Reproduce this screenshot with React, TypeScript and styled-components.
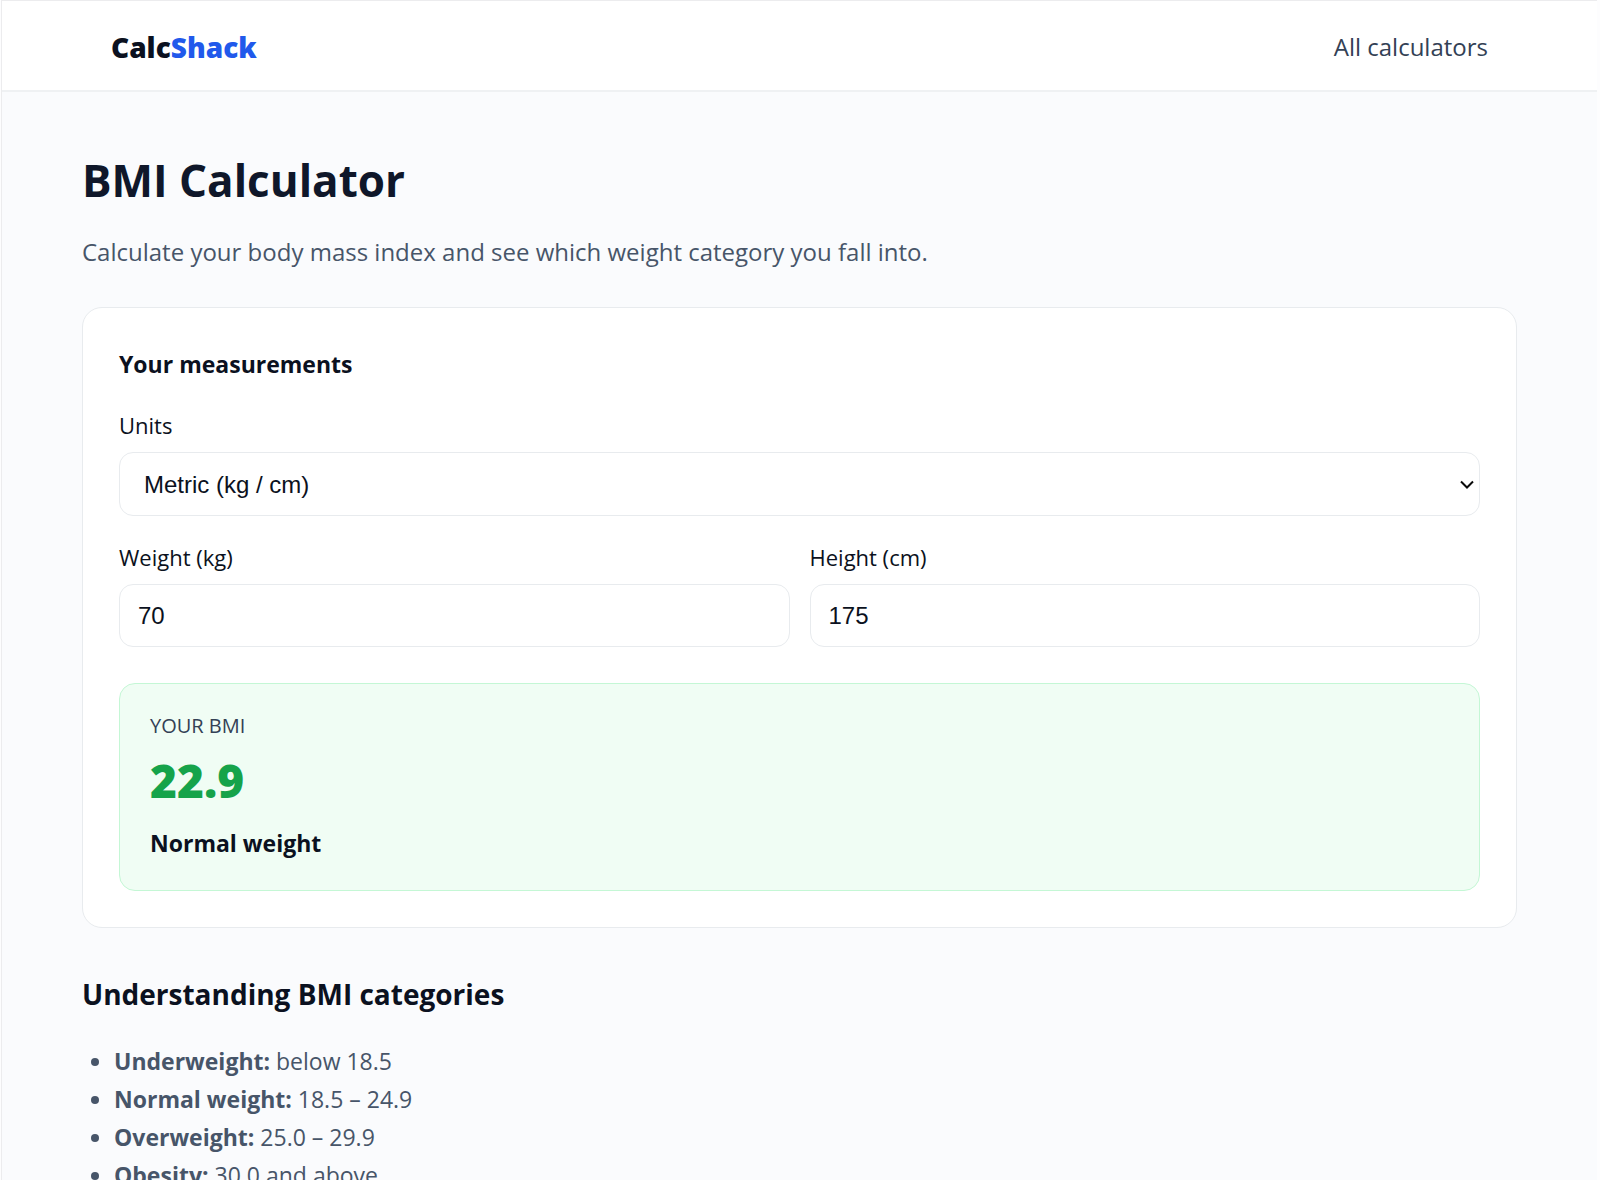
import React, { useState } from "react";
import styled, { createGlobalStyle } from "styled-components";

const sans = `"Open Sans", "Noto Sans", sans-serif`;
const controlFont = `"Liberation Sans", Arial, sans-serif`;

const GlobalStyle = createGlobalStyle`
  *, *::before, *::after { box-sizing: border-box; }
  html { background: #fdfdfe; }
  body {
    margin: 0;
    font-family: ${sans};
    color: #0b1120;
  }
  h1, h2, p, ul { margin: 0; }
`;

const Page = styled.div`
  min-height: 100vh;
  margin: 0 3px 0 1px;
  border-top: 1px solid #ececee;
  border-left: 1px solid #ececee;
  background: #fafbfd;
`;

const Header = styled.header`
  display: flex;
  align-items: center;
  justify-content: space-between;
  height: 91px;
  padding: 3px 109px 0;
  background: #ffffff;
  border-bottom: 2px solid #eff1f3;
`;

const Logo = styled.a`
  font-size: 28px;
  line-height: 40px;
  font-weight: 800;
  color: #0b1120;
  text-decoration: none;
`;

const LogoAccent = styled.span`
  color: #2159eb;
`;

const NavLink = styled.a`
  font-size: 24px;
  line-height: 40px;
  font-weight: 500;
  color: #334155;
  text-decoration: none;
`;

const Main = styled.main`
  padding: 58px 80px;
`;

const Title = styled.h1`
  font-size: 44px;
  line-height: 60px;
  font-weight: 700;
  color: #0f172a;
`;

const Lead = styled.p`
  margin-top: 23px;
  font-size: 24px;
  line-height: 38px;
  color: #475569;
`;

const Card = styled.section`
  margin-top: 36px;
  padding: 36px;
  background: #ffffff;
  border: 1px solid #e8ebee;
  border-radius: 20px;
`;

const CardTitle = styled.h2`
  font-size: 23px;
  line-height: 40px;
  font-weight: 700;
`;

const Field = styled.div`
  display: flex;
  flex-direction: column;
  gap: 12px;
  margin-top: 26px;
`;

const FieldRow = styled.div`
  display: grid;
  grid-template-columns: 1fr 1fr;
  column-gap: 20px;
`;

const Label = styled.label`
  font-size: 22px;
  line-height: 30px;
  font-weight: 500;
`;

const SelectWrap = styled.div`
  position: relative;
`;

const Select = styled.select`
  display: block;
  appearance: none;
  width: 100%;
  height: 64px;
  padding: 0 24px;
  font-family: ${controlFont};
  font-size: 24px;
  color: #0b1120;
  background-color: #ffffff;
  border: 1px solid #e8ebee;
  border-radius: 14px;
`;

const Chevron = styled.svg`
  position: absolute;
  top: 28px;
  right: 6px;
  width: 14px;
  height: 9px;
  fill: none;
  stroke: #0a0a0a;
  stroke-width: 2;
  pointer-events: none;
`;

const Input = styled.input`
  width: 100%;
  height: 63px;
  padding: 0 18px;
  font-family: ${controlFont};
  font-size: 24px;
  color: #0b1120;
  background-color: #ffffff;
  border: 1px solid #e8ebee;
  border-radius: 14px;
`;

const Result = styled.div`
  margin-top: 36px;
  padding: 28px 30px;
  background: #f0fdf4;
  border: 1px solid #c4f7d5;
  border-radius: 16px;
`;

const ResultLabel = styled.p`
  font-size: 20px;
  line-height: 28px;
  text-transform: uppercase;
  color: #334155;
`;

const ResultValue = styled.p`
  margin-top: 8px;
  font-size: 46px;
  line-height: 64px;
  font-weight: 800;
  color: #16a34a;
`;

const ResultCategory = styled.p`
  margin-top: 12px;
  font-size: 23px;
  line-height: 38px;
  font-weight: 700;
`;

const SectionTitle = styled.h2`
  margin-top: 44px;
  font-size: 28px;
  line-height: 44px;
  font-weight: 700;
`;

const CategoryList = styled.ul`
  margin-top: 26px;
  padding-left: 32px;
  font-size: 23px;
  line-height: 38px;
  color: #475569;
`;

const categories = [
  { name: "Underweight", range: "below 18.5" },
  { name: "Normal weight", range: "18.5 – 24.9" },
  { name: "Overweight", range: "25.0 – 29.9" },
  { name: "Obesity", range: "30.0 and above" },
];

function categoryFor(bmi: number): string {
  if (bmi < 18.5) return "Underweight";
  if (bmi < 25) return "Normal weight";
  if (bmi < 30) return "Overweight";
  return "Obesity";
}

export default function App() {
  const [units, setUnits] = useState("metric");
  const [weight, setWeight] = useState("70");
  const [height, setHeight] = useState("175");

  const metric = units === "metric";
  const w = Number(weight);
  const h = Number(height);
  const bmi = metric ? w / (h / 100) ** 2 : (703 * w) / h ** 2;
  const valid = w > 0 && h > 0;

  return (
    <>
      <GlobalStyle />
      <Page>
        <Header>
          <Logo href="#">
            Calc<LogoAccent>Shack</LogoAccent>
          </Logo>
          <nav>
            <NavLink href="#">All calculators</NavLink>
          </nav>
        </Header>
        <Main>
          <Title>BMI Calculator</Title>
          <Lead>Calculate your body mass index and see which weight category you fall into.</Lead>
          <Card>
            <CardTitle>Your measurements</CardTitle>
            <Field>
              <Label htmlFor="units">Units</Label>
              <SelectWrap>
                <Select id="units" value={units} onChange={(e) => setUnits(e.target.value)}>
                  <option value="metric">Metric (kg / cm)</option>
                  <option value="imperial">Imperial (lb / in)</option>
                </Select>
                <Chevron viewBox="0 0 14 9" aria-hidden="true">
                  <path d="M1 1.5 L7 7.5 L13 1.5" />
                </Chevron>
              </SelectWrap>
            </Field>
            <FieldRow>
              <Field>
                <Label htmlFor="weight">Weight ({metric ? "kg" : "lb"})</Label>
                <Input
                  id="weight"
                  type="number"
                  value={weight}
                  onChange={(e) => setWeight(e.target.value)}
                />
              </Field>
              <Field>
                <Label htmlFor="height">Height ({metric ? "cm" : "in"})</Label>
                <Input
                  id="height"
                  type="number"
                  value={height}
                  onChange={(e) => setHeight(e.target.value)}
                />
              </Field>
            </FieldRow>
            <Result aria-live="polite">
              <ResultLabel>Your BMI</ResultLabel>
              <ResultValue>{valid ? bmi.toFixed(1) : "–"}</ResultValue>
              <ResultCategory>{valid ? categoryFor(bmi) : "–"}</ResultCategory>
            </Result>
          </Card>
          <SectionTitle>Understanding BMI categories</SectionTitle>
          <CategoryList>
            {categories.map((c) => (
              <li key={c.name}>
                <strong>{c.name}:</strong> {c.range}
              </li>
            ))}
          </CategoryList>
        </Main>
      </Page>
    </>
  );
}
